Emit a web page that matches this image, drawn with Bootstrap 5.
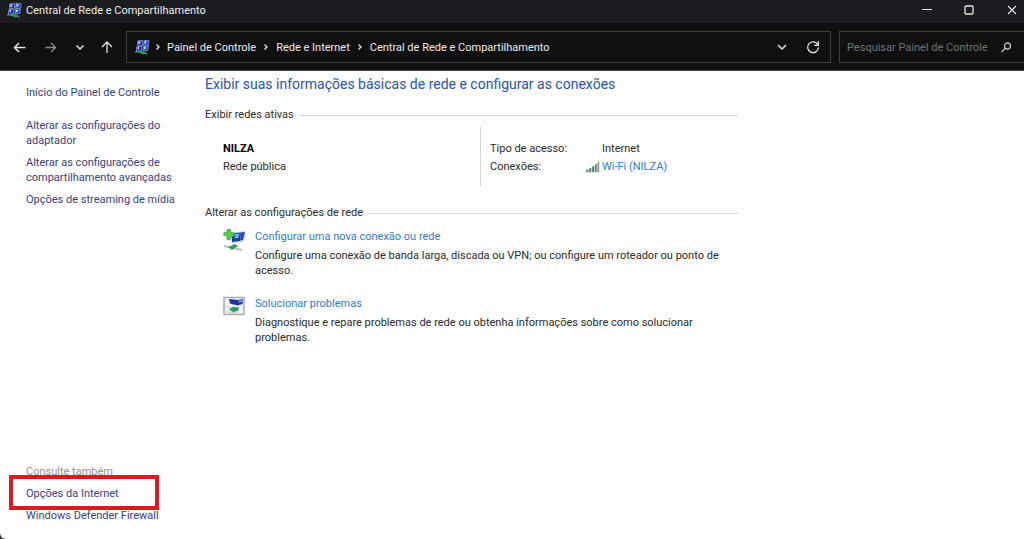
<!DOCTYPE html>
<html lang="pt-BR">
<head>
<meta charset="utf-8">
<meta name="viewport" content="width=device-width, initial-scale=1">
<title>Central de Rede e Compartilhamento</title>
<link href="https://cdn.jsdelivr.net/npm/bootstrap@5.3.0/dist/css/bootstrap.min.css" rel="stylesheet">
<style>
  html { background: #3c3c3c; }
  body { font: 11px/15px "Segoe UI", Roboto, "Open Sans", sans-serif; color: #2b2b2b; background: #fdfdfd; border-bottom-left-radius: 6px; }
  a { text-decoration: none; color: #2f80d0; }
  a:hover { text-decoration: underline; }
  svg { display: block; flex: none; }
  .plain-btn { border: 0; padding: 0; background: none; color: #e4e4e4; display: flex; align-items: center; justify-content: center; }
  .title-strip { height: 23px; background: #1b1c1f; color: #ececec; padding: 0 5px 3px 7px; }
  .window-buttons { gap: 28px; }
  .tool-strip { background: #101011; padding: 8px 0 7px 13px; border-bottom: 1px solid #4a4a4a; color: #ececec; }
  .nav-buttons { gap: 15px; width: 113px; }
  .nav-buttons .dim { color: #8c8c8c; }
  .field-box { height: 32px; border: 1px solid #3f3f3f; background: #101011; }
  .address-box { padding: 0 9px 0 8px; margin-right: 8px; }
  .address-box a { color: #ececec; }
  .search-box { width: 190px; border-right: 0; padding: 0 17px 0 7px; margin-right: -5px; }
  .search-box input { background: none; border: 0; outline: 0; padding: 0; color: #ececec; min-width: 0; }
  .search-box input::placeholder { color: #727272; opacity: 1; }
  .side-pane { width: 205px; padding: 14px 20px 16px 26px; flex: none; }
  .side-pane a { color: #3a437c; }
  .side-list { gap: 7px; }
  .home-link { margin-bottom: 11px; }
  .also-title { color: #949494; }
  .highlighted { position: relative; }
  .highlighted::after { content: ""; position: absolute; inset: -11px 26px -9px -17px; border: 4px solid #dd1a1c; pointer-events: none; }
  .main-pane { max-width: 533px; padding-top: 3px; }
  .page-title { font-size: 14px; line-height: 20px; color: #2a56a5; margin: 0 0 13px; }
  .group-title { font-size: 11px; line-height: 15px; margin: 0; gap: 5px; display: flex; align-items: center; }
  .group-title::after { content: ""; flex: 1; height: 1px; margin-top: 2px; background: #d6d6d6; }
  .network-row { margin: 5px 0 19px; padding-left: 18px; min-height: 59px; }
  .network-name { width: 257px; padding-top: 14px; gap: 3px; }
  .network-name strong { color: #000; }
  .network-facts { border-left: 1px solid #d4d4d4; padding: 14px 0 12px 9px; display: grid; grid-template-columns: 95px auto; row-gap: 3px; }
  .fact-value { padding-left: 17px; }
  .tasks { padding: 9px 0 0 18px; gap: 18px; }
  .task-item { gap: 9px; }
  .task-item p { margin: 4px 0 0; }
</style>
</head>
<body class="d-flex flex-column min-vh-100">

<svg width="0" height="0" class="position-absolute" aria-hidden="true">
  <symbol id="net-icon" viewBox="0 0 15 15">
    <g stroke="#93a6d2" stroke-width=".7">
      <path d="M2.800.8l5-.4-.4 5-5 .4z" fill="#1a34c0"/>
      <path d="M9 .5l5-.2-.4 4.900-5 .3z" fill="#1c3cce"/>
      <path d="M1.900 6.500l5-.3-.3 4.700-5.200.3z" fill="#182fb0"/>
      <path d="M8.300 6.200l5-.3-.4 4.700-5 .3z" fill="#204ad6"/>
    </g>
    <path d="M3.400 1.400l2-.1-.5 2.400-1.700.3zM9.600 1.200l2-.1-.5 2.300-1.700.3zM2.500 7.200l1.700-.1-.4 1.900-1.400.2zM8.900 7l2-.1-.5 2-1.700.3z" fill="#d3e2ff"/>
    <path d="M0 12l5-.2 7.500 2.400" fill="none" stroke="#8c9799" stroke-width="1"/>
    <path d="M2.800 12l3.600-1 5.200 1.200-3.200 2.200z" fill="#1fa455"/>
  </symbol>
</svg>

<header>
  <div class="title-strip d-flex align-items-center">
    <svg width="15" height="15"><use href="#net-icon"/></svg>
    <span class="ms-1">Central de Rede e Compartilhamento</span>
    <div class="window-buttons d-flex ms-auto">
      <button class="plain-btn" aria-label="Minimizar"><svg width="14" height="14" fill="none" stroke="currentColor"><path d="M1 6.500h10"/></svg></button>
      <button class="plain-btn" aria-label="Maximizar"><svg width="14" height="14" fill="none" stroke="currentColor" stroke-width="1.300"><rect x="2" y="3" width="8" height="8" rx="1"/></svg></button>
      <button class="plain-btn" aria-label="Fechar"><svg width="14" height="14" fill="none" stroke="currentColor" stroke-width="1.200"><path d="M3 3l8 8M11 3l-8 8"/></svg></button>
    </div>
  </div>

  <div class="tool-strip d-flex align-items-center overflow-hidden">
    <nav class="nav-buttons d-flex flex-shrink-0" aria-label="Navegação">
      <button class="plain-btn" aria-label="Voltar"><svg width="14" height="14" fill="none" stroke="currentColor" stroke-width="1.500"><path d="M12.500 7.500h-11M6 3l-4.500 4.500L6 12"/></svg></button>
      <button class="plain-btn dim" aria-label="Avançar"><svg width="14" height="14" fill="none" stroke="currentColor" stroke-width="1.300"><path d="M4 7.500h10M9.500 3l4.500 4.500L9.500 12" transform="translate(-.5 0)"/></svg></button>
      <button class="plain-btn" aria-label="Locais recentes"><svg width="14" height="14" fill="none" stroke="currentColor" stroke-width="1.500"><path d="M5.500 5.500L9 9l3.500-3.500"/></svg></button>
      <button class="plain-btn" aria-label="Acima"><svg width="14" height="14" fill="none" stroke="currentColor" stroke-width="1.300"><path d="M7 13V2M2 7l5-5 5 5"/></svg></button>
    </nav>
    <div class="field-box address-box d-flex align-items-center flex-grow-1">
      <svg width="15" height="15"><use href="#net-icon"/></svg>
      <svg width="17" height="12" fill="none" stroke="#e4e4e4" stroke-width="1.300"><path d="M6.500 3.500L9 6l-2.500 2.500"/></svg>
      <a href="#">Painel de Controle</a>
      <svg width="20" height="12" fill="none" stroke="#e4e4e4" stroke-width="1.300"><path d="M8.500 3.500L11 6l-2.500 2.500"/></svg>
      <a href="#">Rede e Internet</a>
      <svg width="20" height="12" fill="none" stroke="#e4e4e4" stroke-width="1.300"><path d="M8.500 3.500L11 6l-2.500 2.500"/></svg>
      <a href="#">Central de Rede e Compartilhamento</a>
      <button class="plain-btn ms-auto" aria-label="Locais anteriores"><svg width="14" height="14" fill="none" stroke="currentColor" stroke-width="1.500"><path d="M3 5l4 4 4-4"/></svg></button>
      <button class="plain-btn ms-3" aria-label="Atualizar"><svg width="16" height="16" fill="none" stroke="currentColor" stroke-width="1.300"><path d="M13 6.200A5.400 5.400 0 1 0 13.400 8.500M13.300 2v4.300H9.200"/></svg></button>
    </div>
    <label class="field-box search-box d-flex align-items-center flex-shrink-0">
      <input class="flex-grow-1" type="search" placeholder="Pesquisar Painel de Controle" aria-label="Pesquisar Painel de Controle">
      <svg width="12" height="12" fill="none" stroke="#bdbdbd" stroke-width="1.300"><circle cx="7.500" cy="5" r="3"/><path d="M5.500 7l-4 4"/></svg>
    </label>
  </div>
</header>

<div class="d-flex flex-grow-1">
  <aside class="side-pane d-flex flex-column justify-content-between">
    <nav class="side-list d-flex flex-column align-items-start">
      <a class="home-link" href="#">Início do Painel de Controle</a>
      <a href="#">Alterar as configurações do adaptador</a>
      <a href="#">Alterar as configurações de compartilhamento avançadas</a>
      <a href="#">Opções de streaming de mídia</a>
    </nav>
    <nav class="side-list d-flex flex-column" aria-label="Consulte também">
      <span class="also-title">Consulte também</span>
      <a class="highlighted" href="#">Opções da Internet</a>
      <a href="#">Windows Defender Firewall</a>
    </nav>
  </aside>

  <main class="main-pane flex-grow-1">
    <h1 class="page-title fw-normal">Exibir suas informações básicas de rede e configurar as conexões</h1>

    <h2 class="group-title fw-normal">Exibir redes ativas</h2>
    <div class="network-row d-flex">
      <div class="network-name d-flex flex-column">
        <strong>NILZA</strong>
        <span>Rede pública</span>
      </div>
      <div class="network-facts">
        <span>Tipo de acesso:</span>
        <span class="fact-value">Internet</span>
        <span>Conexões:</span>
        <span class="d-flex align-items-center">
          <svg width="17" height="12"><g fill="#3f8a60" stroke="#8d9b94" stroke-width=".5"><path d="M1 9.500l2-.8V11H1zM4 8l2-1v4H4zM7 6l2-1v6H7zM10 4l1.500-1v8H10z"/><path d="M12.300 2L14 .8V11h-1.700z" fill="#8aa99a"/></g></svg>
          <a href="#">Wi-Fi (NILZA)</a>
        </span>
      </div>
    </div>

    <h2 class="group-title fw-normal">Alterar as configurações de rede</h2>
    <div class="tasks d-flex flex-column">
      <div class="task-item d-flex">
        <svg width="23" height="23">
          <path d="M7 4l14-2 1.500 1-2 10-12 1z" fill="#c5d5ea"/>
          <path d="M9 4.500l9-1-1 8.500-8 1z" fill="#183c9f"/>
          <path d="M12 5l4.500-.5-1 4.500-4 .5z" fill="#76a5e5"/>
          <path d="M18 3.500l4-.5-2 8-3 .5z" fill="#2146bd"/>
          <path d="M1 17l18 4" stroke="#b4bdbd" stroke-width="2"/>
          <path d="M5 18l7-3 3 2-6 4z" fill="#27a35b"/>
          <path d="M4 .8L7.500.2 8 3.500l3.500.3v3L8 8l-1 3-3-.5V7L.5 6.200l.8-3L4 3.500z" fill="#55c84b" stroke="#39983c" stroke-width=".6"/>
        </svg>
        <div>
          <a href="#">Configurar uma nova conexão ou rede</a>
          <p>Configure uma conexão de banda larga, discada ou VPN; ou configure um roteador ou ponto de acesso.</p>
        </div>
      </div>
      <div class="task-item d-flex">
        <svg width="23" height="20">
          <rect x="1" y="1.500" width="20" height="17" fill="#f0f2f5" stroke="#a8adb5" stroke-width="1.500"/>
          <path d="M6 3l9 1 5-1-.5 5-5 1.500-7.500-2z" fill="#1b359f"/>
          <path d="M15.500 4l4.500-1-.5 3-4 1z" fill="#6786d8"/>
          <path d="M3 11l13 .5M3 16l13 1" stroke="#c6cccf"/>
          <path d="M6 13.500l4-2.500 6 .5-1 3.500-5 1z" fill="#20a45b"/>
        </svg>
        <div>
          <a href="#">Solucionar problemas</a>
          <p>Diagnostique e repare problemas de rede ou obtenha informações sobre como solucionar problemas.</p>
        </div>
      </div>
    </div>
  </main>
</div>

<script src="https://cdn.jsdelivr.net/npm/bootstrap@5.3.0/dist/js/bootstrap.bundle.min.js"></script>
</body>
</html>
